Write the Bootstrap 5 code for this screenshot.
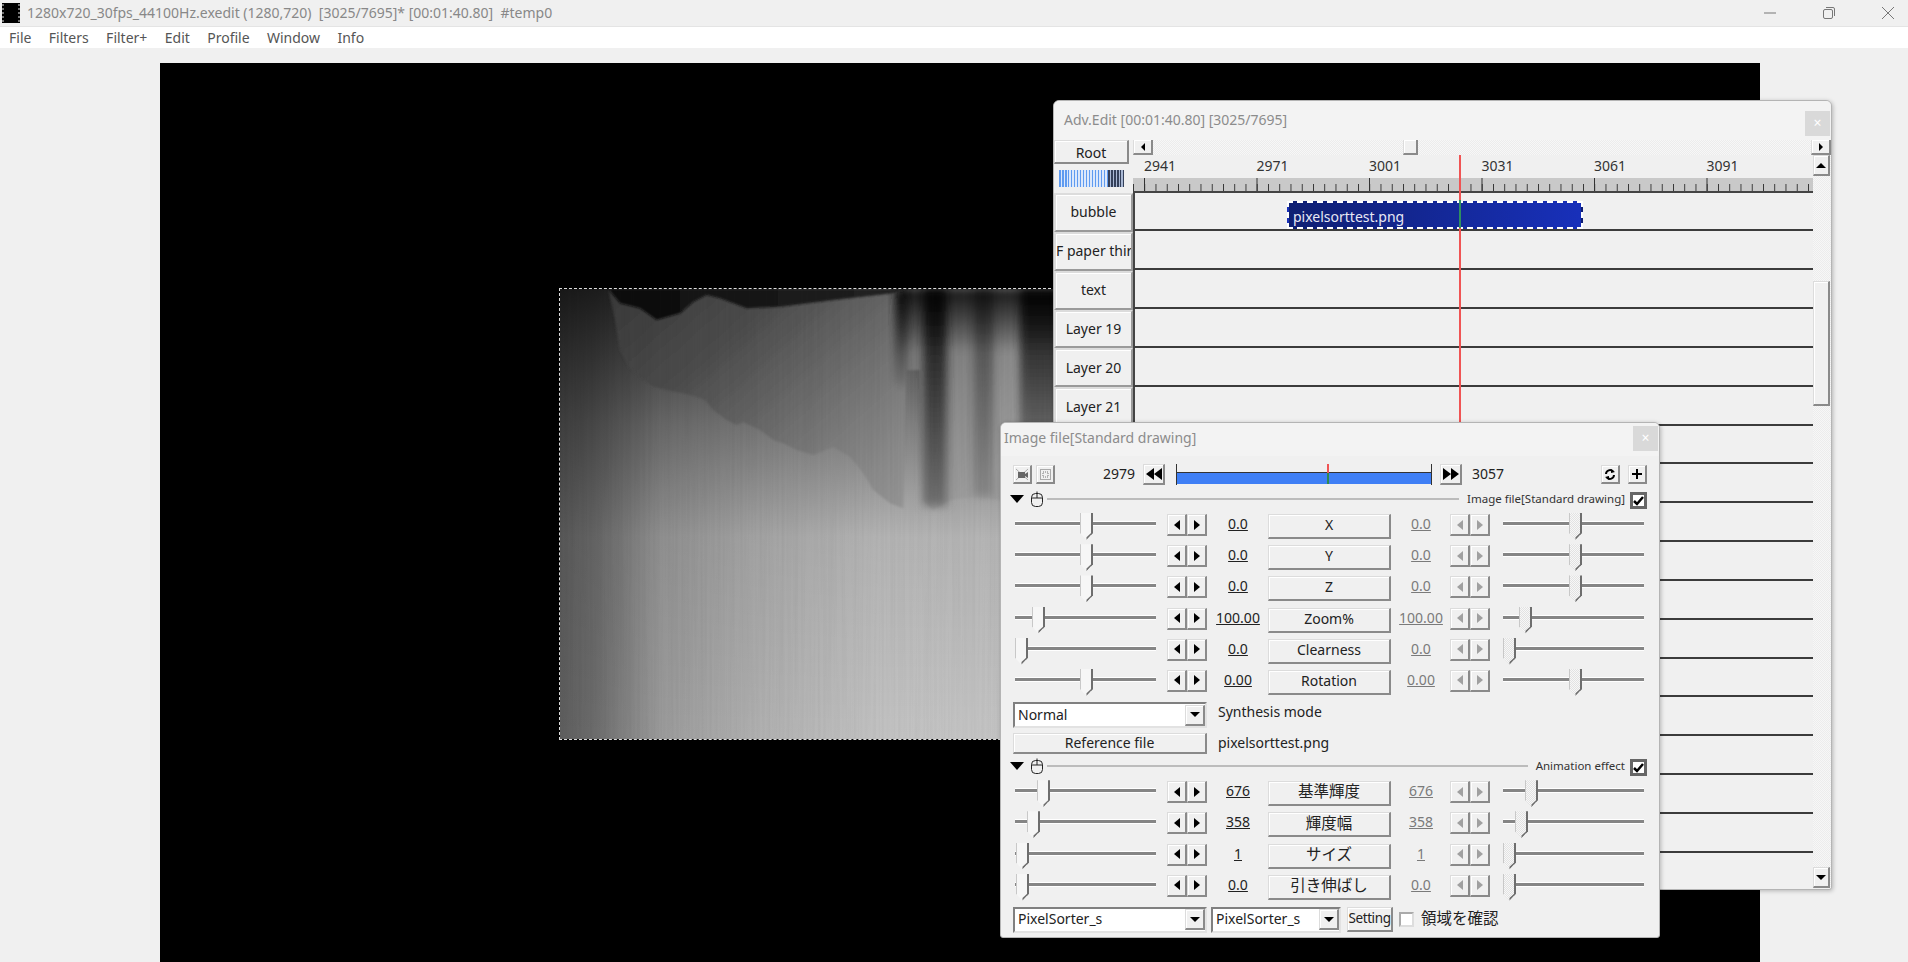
<!doctype html>
<html lang="en"><head><meta charset="utf-8"><title>exedit</title>
<link rel="stylesheet" href="https://cdn.jsdelivr.net/npm/bootstrap@5.3.0/dist/css/bootstrap.min.css">
<style>
html,body{height:100%}
body{background:#f0f0f0;overflow:hidden;font-family:"Noto Sans","Noto Sans CJK JP",sans-serif;font-size:14px;color:#222;line-height:1.2}
.topbar{height:26px;color:#888;white-space:pre;font-size:14px;padding-left:2px}
.topbar .ttl{margin-left:7px}
.ctrls{gap:47px;padding-right:14px}
.menubar{height:22px;background:#fff;border-top:1px solid #e4e4e4;gap:17.4px;padding-left:9px;padding-top:2px;color:#555;font-size:14px}
.stage{flex:1 1 auto;position:relative;padding:15px 148px 0 160px;min-height:0}
.blackcanvas{background:#000;height:100%;position:relative;overflow:hidden}
.pic{position:absolute;left:400px;top:226px;width:500px;height:450px;outline:1px dashed #ddd}
.floatwin{position:absolute;background:#f0f0f0;border:1px solid #b4b4b4;border-radius:6px 6px 3px 3px;overflow:hidden;box-shadow:1px 1px 4px rgba(0,0,0,.25)}
.wintitle{background:#f3f3f3;color:#8c8c8c;position:relative}
.xbtn{position:absolute;right:1px;background:#d9d9d9;width:25px;height:25px;color:#fff;display:flex;align-items:center;justify-content:center;font-size:14px}
.advwin{left:1053px;top:100px;width:779px;height:790px}
.advwin .wintitle{height:39px;padding:11px 0 0 10px}
.advwin .xbtn{top:10px}
.leftcol{width:79px;flex:none}
.btn.wb{--bs-btn-padding-x:0;--bs-btn-padding-y:0;--bs-btn-font-size:14px;--bs-btn-border-radius:0;--bs-btn-line-height:1;background:#f0f0f0;color:#222;border-style:solid;border-width:1px 2px 2px 1px;border-color:#dcdcdc #8a8a8a #8a8a8a #dcdcdc;box-shadow:inset 1px 1px #fff;font-family:inherit;display:flex;align-items:center;justify-content:center;white-space:nowrap;overflow:hidden;flex:none}
.rootb{height:24px;width:75px;padding-top:2px !important}
.ind{height:29px;display:flex;align-items:center;padding-left:5px}
.ind i{display:block;width:65px;height:17px;background:repeating-linear-gradient(90deg,#34405a 0 1.5px,#a9b8d4 1.5px 3px) right/16px 100% no-repeat,repeating-linear-gradient(90deg,#5f9bf0 0 1.5px,#dce8fb 1.5px 3px)}
.layb{height:38.85px;width:79px;border-color:#dcdcdc #9a9a9a #9a9a9a #dcdcdc !important;border-width:2px !important}
.hscroll{height:15px;background:repeating-conic-gradient(#f7f7f7 0 25%,#ececec 0 50%) 0 0/2px 2px}
.dither{background:repeating-conic-gradient(#f7f7f7 0 25%,#ececec 0 50%) 0 0/2px 2px}
.hscroll .harr{width:20px;height:16px;margin-top:-1px}
.hscroll .tl{border-width:4px 4px 4px 0}
.hscroll .tr{border-width:4px 0 4px 4px}
.hgap{width:250px}
.hthumb{width:15px;height:16px;margin-top:-1px}
.tlrow{height:733px}
.tline{width:680px;position:relative;overflow:hidden;flex:none;background:#f0f0f0}
.labels{height:22.5px;padding:3px 0 0 11px;font-size:14px;color:#333;white-space:nowrap}
.labels span{width:112.5px;display:inline-block;flex:none}
.rulerband{height:15px;background-color:#c9c9c9;border-bottom:2px solid #444;background-image:linear-gradient(90deg,#333 1px,transparent 1px),linear-gradient(90deg,#333 1px,transparent 1px);background-size:112.5px 100%,11.25px 7px;background-position:11px 0,0 100%;background-repeat:repeat-x}
.track{height:38.85px;border-bottom:2px solid #3c3c3c;border-left:2px solid #444;position:relative}
.clipbar{position:absolute;left:152px;top:8px;width:296px;height:28px;background:linear-gradient(90deg,#0f1f72,#1830ba);border:2px dashed #fff;color:#e8e8f4;font-size:14px;padding:6px 0 0 4px}
.cursor{position:absolute;left:326px;top:0;bottom:0;width:2px;background:#f05454}
.cursorg{position:absolute;left:326px;top:45px;width:2px;height:28px;background:#2e8f60}
.vscroll{width:18px;flex:none}
.varr{width:17px;height:21px}
.vgap{height:105px}
.vthumb{width:17px;height:125px}
.imgwin{left:1000px;top:422px;width:660px;height:516px}
.imgwin .wintitle{height:33px;padding:7px 0 0 3px}
.imgwin .xbtn{top:3px}
.imgbody{padding:8px 12px 0 12px}
.r1{height:21px}
.mini{width:19px;height:19px}
.num1{width:80px;text-align:right}
.step{width:22px;height:21px;margin-left:8px}
.seek{width:256px;height:21px;margin-left:11px;position:relative;border-left:1.5px solid #333;border-right:1.5px solid #333;flex:none}
.seek::before{content:"";position:absolute;left:0;right:0;top:8px;bottom:1px;background:#3f7ff5;border-top:1.5px solid #333}
.seek i{position:absolute;left:150px;top:0;width:1.5px;height:9px;background:#f05454}
.seek b{position:absolute;left:150px;top:9px;width:1.5px;height:11px;background:#2e8a50}
.num2{margin-left:10px}
.hdr{height:22px;margin-top:6px;margin-left:-3px;align-items:flex-start}
.hdr2{margin-top:4px}
.tridown{width:0;height:0;border-style:solid;border-width:8px 7px 0 7px;border-color:#000 transparent transparent;margin-top:4px;flex:none}
.mouseic{margin-left:7px;flex:none}
.rule{flex:1 1 auto;height:2px;background:#bcbcbc;margin:7px 8px 0 4px}
.hlabel{font-size:11.5px;color:#333;margin-top:1px;white-space:nowrap}
.chk{width:17px;height:17px;border:3px solid #666;background:#fff;margin-left:5px;flex:none;margin-top:1px;display:flex;align-items:center;justify-content:center}
.prow{height:31.2px}
.sl{width:154px;position:relative;flex:none}
.sl::before{content:"";position:absolute;left:2px;width:141px;top:9px;height:3px;background:#858585;box-shadow:0 1px #fff,0 -1px #fff}
.sl.rt{width:154px}
.sl.rt::before{left:13px}
.thumb{position:absolute;top:0;width:13px;height:27px;clip-path:polygon(0 0,100% 0,100% 74%,50% 100%,0 74%);background:linear-gradient(90deg,#c8c8c8 1px,#f6f6f6 1px,#f6f6f6 calc(100% - 2px),#6e6e6e calc(100% - 2px))}
.thumb::after{content:"";position:absolute;inset:0;background:#6e6e6e;clip-path:polygon(100% 68%,100% 74%,50% 100%,50% 90%)}
.rt .thumb{background:linear-gradient(90deg,#c8c8c8 1px,transparent 1px,transparent calc(100% - 2px),#6e6e6e calc(100% - 2px)),repeating-conic-gradient(#f7f7f7 0 25%,#e2e2e2 0 50%) 0 0/2px 2px}
.spin{width:40px;flex:none;margin-top:1px}
.btn.sb{width:20px;height:22px}
.btn.pb{width:123px;height:25px;margin-top:1px;padding-bottom:2px}
.val{width:61px;flex:none;text-align:center;margin-top:3px;height:19px;padding-left:1px}
.val u{color:#222}
.val.dim{width:59px}
.val.dim u{color:#7a7a7a}
.tl,.tr{width:0;height:0;border-style:solid;display:block}
.tl{border-width:5px 6px 5px 0;border-color:transparent #000 transparent transparent}
.tr{border-width:5px 0 5px 6px;border-color:transparent transparent transparent #000}
.off .tl{border-right-color:#a0a0a0}
.off .tr{border-left-color:#a0a0a0}
.combo{border-style:solid;border-width:2px;border-color:#808080 #e2e2e2 #e2e2e2 #808080;background:#fff;align-items:center;padding-left:3px;flex:none;height:26px}
.comboa{width:194px}
.combob{width:130px}
.btn.darr{width:20px;height:21px;margin-left:auto}
.tdn{width:0;height:0;border-style:solid;border-width:5px 5px 0 5px;border-color:#000 transparent transparent}
.sidetext{margin-left:11px;white-space:nowrap}
.synthrow{margin-top:2px;height:26px}
.synthrow .sidetext{margin-top:2px}
.refrow{margin-top:5px;height:21px}
.btn.refb{width:194px;height:21px}
.botrow{margin-top:2px;height:28px}
.btn.setb{width:46px;height:25px;margin-left:6px;font-size:13.5px;letter-spacing:-.4px}
.chk0{width:15px;height:15px;border:2px solid #aaa;background:#fff;margin:5px 0 0 6px;flex:none;border-right-color:#ddd;border-bottom-color:#ddd}
.cjkt{margin:2px 0 0 7px;white-space:nowrap;font-size:15.5px}
.cj{font-size:15.5px}
</style></head>
<body class="d-flex flex-column">
<div class="topbar d-flex align-items-center flex-shrink-0">
<svg width="18" height="20" viewBox="0 0 18 20"><rect width="18" height="20" fill="#000"/><path d="M1 1v18M17 1v18" stroke="#999" stroke-width="1.5" stroke-dasharray="2 2"/></svg>
<span class="ttl">1280x720_30fps_44100Hz.exedit (1280,720)  [3025/7695]* [00:01:40.80]  #temp0</span>
<div class="ctrls d-flex align-items-center ms-auto">
<svg width="12" height="12" viewBox="0 0 12 12"><path d="M0 6H12" stroke="#777"/></svg>
<svg width="12" height="12" viewBox="0 0 12 12" fill="none" stroke="#777"><rect x=".5" y="2.5" width="9" height="9" rx="1.5"/><path d="M3 .5H10A1.5 1.5 0 0 1 11.500 2V9"/></svg>
<svg width="12" height="12" viewBox="0 0 12 12"><path d="M0 0L12 12M12 0L0 12" stroke="#777"/></svg>
</div></div>
<div class="menubar d-flex align-items-center flex-shrink-0"><span>File</span><span>Filters</span><span>Filter+</span><span>Edit</span><span>Profile</span><span>Window</span><span>Info</span></div>
<div class="stage"><div class="blackcanvas">
<svg class="pic" viewBox="60 57 1500 1350" preserveAspectRatio="none">
<defs>
<linearGradient id="hg" x1="0" x2="1" y1="0" y2="0"><stop offset="0" stop-color="#5e5e5e"/><stop offset=".07" stop-color="#6c6c6c"/><stop offset=".2" stop-color="#9a9a9a"/><stop offset=".4" stop-color="#b0b0b0"/><stop offset=".65" stop-color="#c2c2c2"/><stop offset="1" stop-color="#c4c4c4"/></linearGradient>
<linearGradient id="vg" x1="0" x2="0" y1="0" y2="1"><stop offset="0" stop-color="#000" stop-opacity=".74"/><stop offset=".3" stop-color="#000" stop-opacity=".34"/><stop offset=".55" stop-color="#000" stop-opacity=".08"/><stop offset="1" stop-color="#000" stop-opacity="0"/></linearGradient>
<linearGradient id="mg" x1="0" x2="1" y1="0" y2=".55"><stop offset="0" stop-color="#383838"/><stop offset=".3" stop-color="#4c4c4c"/><stop offset=".55" stop-color="#6c6c6c"/><stop offset=".8" stop-color="#8a8a8a"/><stop offset="1" stop-color="#9c9c9c"/></linearGradient>
<linearGradient id="dk" x1="0" x2="0" y1="0" y2="1"><stop offset="0" stop-color="#101010"/><stop offset=".45" stop-color="#3a3a3a"/><stop offset="1" stop-color="#707070"/></linearGradient>
<linearGradient id="tp" x1="0" x2="0" y1="0" y2="1"><stop offset="0" stop-color="#000" stop-opacity=".8"/><stop offset="1" stop-color="#000" stop-opacity="0"/></linearGradient>
<linearGradient id="tq" x1="0" x2="1"><stop offset="0" stop-color="#0c0c0c"/><stop offset="1" stop-color="#242424"/></linearGradient>
<filter id="b1" x="-5%" y="-5%" width="110%" height="110%"><feGaussianBlur stdDeviation="3"/></filter>
<filter id="b2" x="-60%" y="-5%" width="220%" height="112%"><feGaussianBlur stdDeviation="13"/></filter>
<filter id="b3" x="-10%" y="-5%" width="120%" height="110%"><feGaussianBlur stdDeviation="12"/></filter>
<filter id="nz" x="0" y="0" width="100%" height="100%"><feTurbulence type="fractalNoise" baseFrequency="0.12 0.0015" numOctaves="2" seed="4"/><feColorMatrix values="0 0 0 0 0 0 0 0 0 0 0 0 0 0 0 1.6 0 0 0 -.55"/></filter>
</defs>
<rect x="60" y="57" width="1500" height="1350" fill="url(#hg)"/>
<rect x="60" y="57" width="1500" height="1350" fill="url(#vg)"/>
<polygon filter="url(#b1)" fill="url(#mg)" points="205,57 225,150 240,240 265,290 300,320 340,350 390,362 430,370 470,380 495,390 520,420 560,450 590,465 610,456 660,480 700,510 730,520 770,540 820,555 880,530 930,560 970,610 1000,660 1050,700 1090,715 1100,300 1140,300 1150,690 1180,720 1230,690 1300,680 1380,690 1560,650 1560,57"/>
<rect filter="url(#b2)" x="1065" y="57" width="35" height="290" fill="url(#dk)"/>
<rect filter="url(#b2)" x="1150" y="57" width="70" height="650" fill="url(#dk)"/>
<rect filter="url(#b2)" x="1300" y="57" width="60" height="620" fill="url(#dk)" opacity=".5"/>
<rect filter="url(#b2)" x="1440" y="57" width="120" height="480" fill="url(#dk)"/>
<rect x="1080" y="57" width="480" height="190" fill="url(#tp)" filter="url(#b3)"/>
<polygon filter="url(#b1)" fill="url(#tq)" points="205,57 240,100 300,115 350,150 420,130 460,95 500,75 540,85 620,115 720,110 880,90 1060,70 1100,57"/>
<rect x="60" y="57" width="1500" height="1350" filter="url(#nz)" opacity=".035"/>
</svg>
</div></div>

<div class="floatwin advwin">
<div class="wintitle">Adv.Edit [00:01:40.80] [3025/7695]<span class="xbtn">×</span></div>
<div class="d-flex">
<div class="leftcol">
<button class="btn wb rootb">Root</button>
<div class="ind"><i></i></div>
<button class="btn wb layb">bubble</button>
<button class="btn wb layb justify-content-start">F paper thir</button>
<button class="btn wb layb">text</button>
<button class="btn wb layb">Layer 19</button>
<button class="btn wb layb">Layer 20</button>
<button class="btn wb layb">Layer 21</button>
</div>
<div class="flex-grow-1">
<div class="hscroll d-flex">
<button class="btn wb harr"><i class="tl"></i></button><div class="hgap"></div><button class="btn wb hthumb"></button>
<button class="btn wb harr ms-auto"><i class="tr"></i></button>
</div>
<div class="d-flex tlrow">
<div class="tline">
<div class="labels d-flex"><span>2941</span><span>2971</span><span>3001</span><span>3031</span><span>3061</span><span>3091</span></div>
<div class="rulerband"></div>
<div class="track"><div class="clipbar">pixelsorttest.png</div></div>
<div class="track"></div><div class="track"></div><div class="track"></div><div class="track"></div><div class="track"></div><div class="track"></div><div class="track"></div><div class="track"></div><div class="track"></div><div class="track"></div><div class="track"></div><div class="track"></div><div class="track"></div><div class="track"></div><div class="track"></div><div class="track"></div><div class="track"></div>
<div class="cursor"></div><div class="cursorg"></div>
</div>
<div class="vscroll d-flex flex-column dither">
<button class="btn wb varr"><i class="tdn" style="transform:rotate(180deg)"></i></button><div class="vgap"></div><button class="btn wb vthumb"></button>
<button class="btn wb varr mt-auto"><i class="tdn"></i></button>
</div>
</div>
</div>
</div>
</div>

<div class="floatwin imgwin">
<div class="wintitle">Image file[Standard drawing]<span class="xbtn">×</span></div>
<div class="imgbody">
<div class="d-flex align-items-center r1">
<button class="btn wb mini me-1"><svg width="14" height="13" viewBox="0 0 14 13"><path d="M1 1L13 12M13 1L1 12" stroke="#aaa"/><path d="M3 4H10V10H3ZM10 6L13 4V10L10 8Z" fill="#666"/></svg></button>
<button class="btn wb mini"><svg width="11" height="11" viewBox="0 0 11 11"><rect x=".5" y=".5" width="10" height="10" fill="none" stroke="#aaa"/><rect x="3" y="3" width="5" height="5" fill="none" stroke="#777" stroke-dasharray="1 1"/></svg></button>
<span class="num1">2979</span>
<button class="btn wb step"><svg width="16" height="12" viewBox="0 0 16 12"><path d="M8 0V12L0 6ZM16 0V12L8 6Z"/></svg></button>
<div class="seek"><i></i><b></b></div>
<button class="btn wb step"><svg width="16" height="12" viewBox="0 0 16 12"><path d="M0 0V12L8 6ZM8 0V12L16 6Z"/></svg></button>
<span class="num2">3057</span>
<button class="btn wb mini ms-auto"><svg width="12" height="13" viewBox="0 0 12 13" fill="none" stroke="#000" stroke-width="2"><path d="M2 6A4 4 0 0 1 9 3.500M10 7A4 4 0 0 1 3 9.500"/><path d="M7 1L11 4 7 5ZM5 12L1 9 5 8Z" fill="#000" stroke="none"/></svg></button>
<button class="btn wb mini ms-2"><svg width="12" height="12" viewBox="0 0 12 12"><path d="M6 1V11M1 6H11" stroke="#000" stroke-width="2"/></svg></button>
</div>
<div class="d-flex hdr">
<i class="tridown"></i>
<svg class="mouseic" width="12" height="16" viewBox="0 0 12 16" fill="none" stroke="#222"><rect x=".5" y="2.500" width="11" height="13" rx="4"/><path d="M.5 7H11.500M6 .5V7"/></svg>
<div class="rule"></div><span class="hlabel">Image file[Standard drawing]</span>
<span class="chk"><svg width="11" height="10" viewBox="0 0 11 10"><path d="M1 5L4 8L10 1" fill="none" stroke="#000" stroke-width="2.500"/></svg></span>
</div>

<div class="prow d-flex"><div class="sl"><span class="thumb" style="left:67px"></span></div><div class="spin d-flex"><button class="btn wb sb"><i class="tl"></i></button><button class="btn wb sb"><i class="tr"></i></button></div><div class="val"><u>0.0</u></div><button class="btn wb pb">X</button><div class="val dim"><u>0.0</u></div><div class="spin off d-flex"><button class="btn wb sb"><i class="tl"></i></button><button class="btn wb sb"><i class="tr"></i></button></div><div class="sl rt"><span class="thumb" style="left:79px"></span></div></div>
<div class="prow d-flex"><div class="sl"><span class="thumb" style="left:67px"></span></div><div class="spin d-flex"><button class="btn wb sb"><i class="tl"></i></button><button class="btn wb sb"><i class="tr"></i></button></div><div class="val"><u>0.0</u></div><button class="btn wb pb">Y</button><div class="val dim"><u>0.0</u></div><div class="spin off d-flex"><button class="btn wb sb"><i class="tl"></i></button><button class="btn wb sb"><i class="tr"></i></button></div><div class="sl rt"><span class="thumb" style="left:79px"></span></div></div>
<div class="prow d-flex"><div class="sl"><span class="thumb" style="left:67px"></span></div><div class="spin d-flex"><button class="btn wb sb"><i class="tl"></i></button><button class="btn wb sb"><i class="tr"></i></button></div><div class="val"><u>0.0</u></div><button class="btn wb pb">Z</button><div class="val dim"><u>0.0</u></div><div class="spin off d-flex"><button class="btn wb sb"><i class="tl"></i></button><button class="btn wb sb"><i class="tr"></i></button></div><div class="sl rt"><span class="thumb" style="left:79px"></span></div></div>
<div class="prow d-flex"><div class="sl"><span class="thumb" style="left:19px"></span></div><div class="spin d-flex"><button class="btn wb sb"><i class="tl"></i></button><button class="btn wb sb"><i class="tr"></i></button></div><div class="val"><u>100.00</u></div><button class="btn wb pb">Zoom%</button><div class="val dim"><u>100.00</u></div><div class="spin off d-flex"><button class="btn wb sb"><i class="tl"></i></button><button class="btn wb sb"><i class="tr"></i></button></div><div class="sl rt"><span class="thumb" style="left:29px"></span></div></div>
<div class="prow d-flex"><div class="sl"><span class="thumb" style="left:2px"></span></div><div class="spin d-flex"><button class="btn wb sb"><i class="tl"></i></button><button class="btn wb sb"><i class="tr"></i></button></div><div class="val"><u>0.0</u></div><button class="btn wb pb">Clearness</button><div class="val dim"><u>0.0</u></div><div class="spin off d-flex"><button class="btn wb sb"><i class="tl"></i></button><button class="btn wb sb"><i class="tr"></i></button></div><div class="sl rt"><span class="thumb" style="left:13px"></span></div></div>
<div class="prow d-flex"><div class="sl"><span class="thumb" style="left:67px"></span></div><div class="spin d-flex"><button class="btn wb sb"><i class="tl"></i></button><button class="btn wb sb"><i class="tr"></i></button></div><div class="val"><u>0.00</u></div><button class="btn wb pb">Rotation</button><div class="val dim"><u>0.00</u></div><div class="spin off d-flex"><button class="btn wb sb"><i class="tl"></i></button><button class="btn wb sb"><i class="tr"></i></button></div><div class="sl rt"><span class="thumb" style="left:79px"></span></div></div>

<div class="d-flex synthrow"><div class="combo comboa d-flex">Normal<button class="btn wb darr"><i class="tdn"></i></button></div><span class="sidetext">Synthesis mode</span></div>
<div class="d-flex refrow align-items-center"><button class="btn wb refb">Reference file</button><span class="sidetext">pixelsorttest.png</span></div>

<div class="d-flex hdr hdr2">
<i class="tridown"></i>
<svg class="mouseic" width="12" height="16" viewBox="0 0 12 16" fill="none" stroke="#222"><rect x=".5" y="2.500" width="11" height="13" rx="4"/><path d="M.5 7H11.500M6 .5V7"/></svg>
<div class="rule"></div><span class="hlabel">Animation effect</span>
<span class="chk"><svg width="11" height="10" viewBox="0 0 11 10"><path d="M1 5L4 8L10 1" fill="none" stroke="#000" stroke-width="2.500"/></svg></span>
</div>

<div class="prow d-flex"><div class="sl"><span class="thumb" style="left:24px"></span></div><div class="spin d-flex"><button class="btn wb sb"><i class="tl"></i></button><button class="btn wb sb"><i class="tr"></i></button></div><div class="val"><u>676</u></div><button class="btn wb pb cj">基準輝度</button><div class="val dim"><u>676</u></div><div class="spin off d-flex"><button class="btn wb sb"><i class="tl"></i></button><button class="btn wb sb"><i class="tr"></i></button></div><div class="sl rt"><span class="thumb" style="left:35px"></span></div></div>
<div class="prow d-flex"><div class="sl"><span class="thumb" style="left:14px"></span></div><div class="spin d-flex"><button class="btn wb sb"><i class="tl"></i></button><button class="btn wb sb"><i class="tr"></i></button></div><div class="val"><u>358</u></div><button class="btn wb pb cj">輝度幅</button><div class="val dim"><u>358</u></div><div class="spin off d-flex"><button class="btn wb sb"><i class="tl"></i></button><button class="btn wb sb"><i class="tr"></i></button></div><div class="sl rt"><span class="thumb" style="left:25px"></span></div></div>
<div class="prow d-flex"><div class="sl"><span class="thumb" style="left:3px"></span></div><div class="spin d-flex"><button class="btn wb sb"><i class="tl"></i></button><button class="btn wb sb"><i class="tr"></i></button></div><div class="val"><u>1</u></div><button class="btn wb pb cj">サイズ</button><div class="val dim"><u>1</u></div><div class="spin off d-flex"><button class="btn wb sb"><i class="tl"></i></button><button class="btn wb sb"><i class="tr"></i></button></div><div class="sl rt"><span class="thumb" style="left:13px"></span></div></div>
<div class="prow d-flex"><div class="sl"><span class="thumb" style="left:3px"></span></div><div class="spin d-flex"><button class="btn wb sb"><i class="tl"></i></button><button class="btn wb sb"><i class="tr"></i></button></div><div class="val"><u>0.0</u></div><button class="btn wb pb cj">引き伸ばし</button><div class="val dim"><u>0.0</u></div><div class="spin off d-flex"><button class="btn wb sb"><i class="tl"></i></button><button class="btn wb sb"><i class="tr"></i></button></div><div class="sl rt"><span class="thumb" style="left:13px"></span></div></div>

<div class="d-flex botrow">
<div class="combo comboa d-flex">PixelSorter_s<button class="btn wb darr"><i class="tdn"></i></button></div>
<div class="combo combob d-flex ms-1">PixelSorter_s<button class="btn wb darr"><i class="tdn"></i></button></div>
<button class="btn wb setb">Setting</button>
<span class="chk0"></span><span class="cjkt">領域を確認</span>
</div>
</div>
</div>
</body></html>
